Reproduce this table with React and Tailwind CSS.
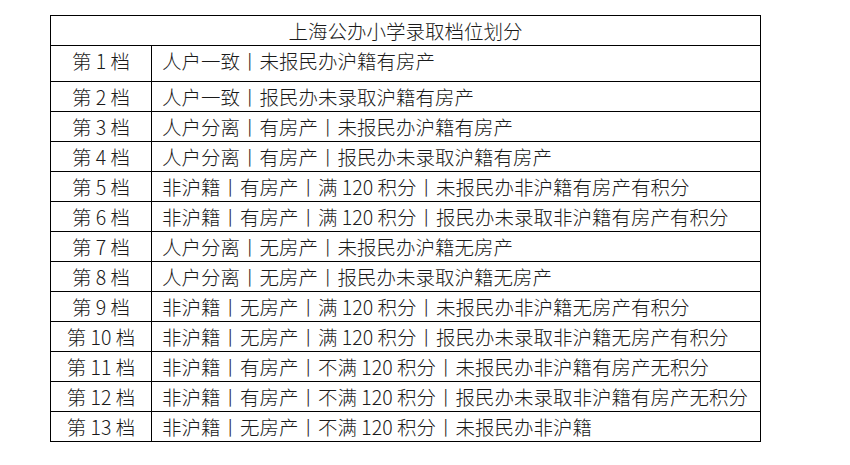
import React from "react";

const rows = [
  ["第 1 档", "人户一致丨未报民办沪籍有房产"],
  ["第 2 档", "人户一致丨报民办未录取沪籍有房产"],
  ["第 3 档", "人户分离丨有房产丨未报民办沪籍有房产"],
  ["第 4 档", "人户分离丨有房产丨报民办未录取沪籍有房产"],
  ["第 5 档", "非沪籍丨有房产丨满 120 积分丨未报民办非沪籍有房产有积分"],
  ["第 6 档", "非沪籍丨有房产丨满 120 积分丨报民办未录取非沪籍有房产有积分"],
  ["第 7 档", "人户分离丨无房产丨未报民办沪籍无房产"],
  ["第 8 档", "人户分离丨无房产丨报民办未录取沪籍无房产"],
  ["第 9 档", "非沪籍丨无房产丨满 120 积分丨未报民办非沪籍无房产有积分"],
  ["第 10 档", "非沪籍丨无房产丨满 120 积分丨报民办未录取非沪籍无房产有积分"],
  ["第 11 档", "非沪籍丨有房产丨不满 120 积分丨未报民办非沪籍有房产无积分"],
  ["第 12 档", "非沪籍丨有房产丨不满 120 积分丨报民办未录取非沪籍有房产无积分"],
  ["第 13 档", "非沪籍丨无房产丨不满 120 积分丨未报民办非沪籍"],
];

export default function App() {
  return (
    <div
      className="w-[850px] h-[465px] bg-white text-[#1a1a1a] overflow-hidden"
      style={{ fontFamily: '"Noto Sans CJK SC", "Noto Sans", sans-serif' }}
    >
      <div className="ml-[50px] mt-[15px] w-[711px] border-l border-t border-black text-[19.5px] leading-none font-light">
        <div className="h-[30px] box-border border-b border-r border-black flex items-center justify-center">
          上海公办小学录取档位划分
        </div>
        {rows.map(([a, b], i) => (
          <div
            key={i}
            className={`flex box-border border-b border-black ${i === 0 ? "h-[36px]" : "h-[30px]"}`}
          >
            <div
              className={`w-[101px] shrink-0 box-border border-r border-black flex justify-center ${i === 0 ? "items-start pt-[5px]" : "items-center"}`}
            >
              {a}
            </div>
            <div
              className={`flex-1 box-border border-r border-black flex pl-[10px] whitespace-nowrap ${i === 0 ? "items-start pt-[5px]" : "items-center"}`}
            >
              {b}
            </div>
          </div>
        ))}
      </div>
    </div>
  );
}
